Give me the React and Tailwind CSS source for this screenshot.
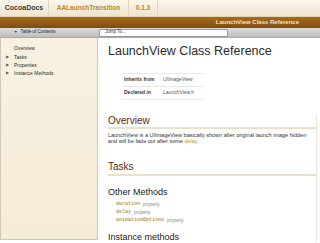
const sans = "font-['Liberation_Sans',Arial,sans-serif]"
const mono = "font-['Liberation_Mono','Courier_New',monospace]"

const sideItems = [
  { label: "Overview", arrow: false },
  { label: "Tasks", arrow: true },
  { label: "Properties", arrow: true },
  { label: "Instance Methods", arrow: true },
]

const methods = ["duration", "delay", "animationOptions"]

export default function App() {
  return (
    <div className={`w-[320px] h-[243px] overflow-hidden bg-white text-[#333] ${sans}`}>
      {/* top tabs */}
      <div className="h-[17px] flex bg-gradient-to-b from-[#fbf7ee] to-[#efe4cc] border-b border-[#e2d3b2]">
        <div className="w-[49px] flex items-center justify-center border-r border-[#e3d6bb] text-[7px] font-bold text-[#3a3a3a]">
          CocoaDocs
        </div>
        <div className="w-[80px] flex items-center justify-center border-r border-[#e3d6bb] text-[6.5px] font-bold text-[#b38a2e]">
          AALaunchTransition
        </div>
        <div className="w-[29px] flex items-center justify-center border-r border-[#e3d6bb] text-[6.5px] font-bold text-[#b38a2e]">
          0.1.3
        </div>
      </div>

      {/* brown bar */}
      <div className="h-[11px] flex items-center justify-end pr-[21px] bg-gradient-to-b from-[#a86c1e] to-[#7f4c0e]">
        <span className="text-[6px] font-bold text-[#f3e4c4]">LaunchView Class Reference</span>
      </div>

      {/* gray toolbar */}
      <div className="h-[10px] flex items-center bg-gradient-to-b from-[#dcdcdc] to-[#bdbdbd] border-b border-[#a9a9a9]">
        <div className="w-[98px] flex items-center pl-[14px] gap-[3px] text-[4.5px] text-[#222]">
          <span className="text-[3.5px]">▼</span>
          <span>Table of Contents</span>
        </div>
        <div className="ml-[1px] w-[129px] h-[8px] rounded-[2px] bg-white border border-[#9a9a9a] flex items-center justify-between px-[5px] text-[4.5px] text-[#333]">
          <span>Jump To...</span>
          <span className="text-[5px] leading-none">:</span>
        </div>
      </div>

      <div className="flex h-[205px]">
        {/* sidebar */}
        <div className="w-[98px] h-[202px] shrink-0 bg-gradient-to-b from-[#f8f1e1] to-[#f5ecd8] border-r border-[#cfc8bb] border-l border-b pt-[7px]">
          <ul className="flex flex-col">
            {sideItems.map((it) => (
              <li key={it.label} className="h-[8.3px] flex items-center text-[5px] text-[#2a2a2a]">
                <span className="w-[13px] flex justify-center text-[3.5px] text-[#555]">{it.arrow ? "▶" : ""}</span>
                <span>{it.label}</span>
              </li>
            ))}
          </ul>
        </div>

        {/* content */}
        <div className="flex-1 pl-[10px] pr-[3px]">
          <h1 className="mt-[6px] text-[12.5px] leading-[15px] text-[#2b2b2b]">LaunchView Class Reference</h1>

          <table className="ml-[14px] mt-[14px] w-[81px] border-t border-b border-[#e8e8e8] text-[5px]">
            <tbody>
              <tr className="h-[13px] border-b border-[#e8e8e8]">
                <td className="pl-[2px] w-[41px] font-bold text-[#333]">Inherits from</td>
                <td className="text-[#555]">UIImageView</td>
              </tr>
              <tr className="h-[13px]">
                <td className="pl-[2px] font-bold text-[#333]">Declared in</td>
                <td className="text-[#555]">LaunchView.h</td>
              </tr>
            </tbody>
          </table>

          <div className="border-r border-[#ece6d6]">
            <h2 className="mt-[15px] text-[10px] leading-[12px] text-[#5b2a16] border-b-2 border-[#e9e0c8]">Overview</h2>
            <p className="mt-[3px] text-[5.5px] leading-[6px] text-[#333] whitespace-nowrap">
              LaunchView is a UIImageView basically shown after original launch image hidden
              <br />
              and will be fade out after some <span className="text-[#b8962e]">delay</span>.
            </p>

            <h2 className="mt-[16px] text-[10px] leading-[14px] text-[#5b2a16] border-b-2 border-[#e9e0c8]">Tasks</h2>
            <h3 className="mt-[11px] text-[9px] leading-[10px] text-[#222]">Other Methods</h3>
            <ul className="mt-[4px] pl-[8px]">
              {methods.map((m) => (
                <li key={m} className="h-[8px] flex items-center gap-[3px]">
                  <span className={`${mono} text-[5px] font-bold text-[#b89a5c]`}>{m}</span>
                  <span className="text-[4.5px] italic text-[#888]">property</span>
                </li>
              ))}
            </ul>
            <h3 className="mt-[7px] text-[9px] leading-[10px] text-[#222]">Instance methods</h3>
          </div>
        </div>
      </div>
    </div>
  )
}
